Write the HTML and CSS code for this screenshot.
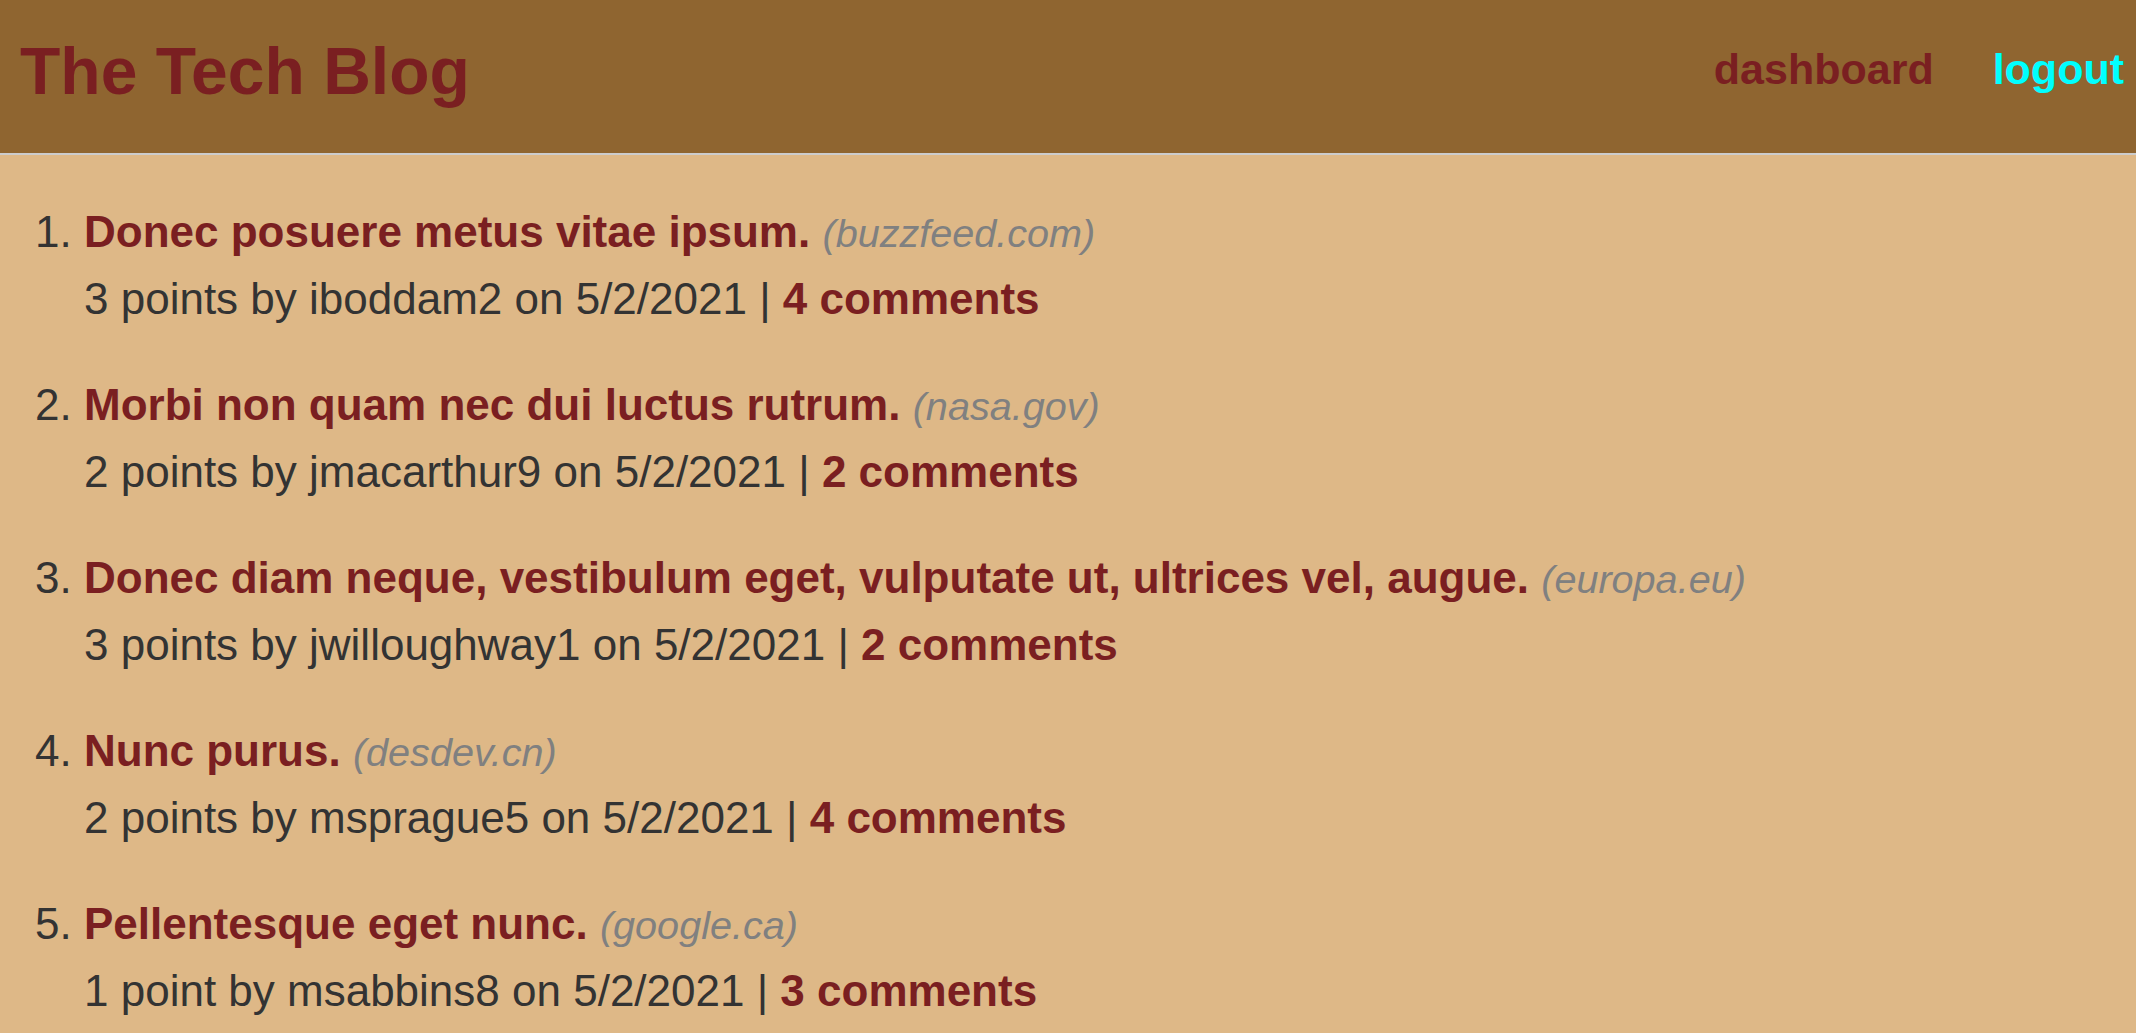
FILE: index.html
```html
<!DOCTYPE html>
<html lang="en">
<head>
<meta charset="utf-8">
<title>The Tech Blog</title>
<link rel="stylesheet" href="styles.css">
</head>
<body>
<header class="site-header">
  <h1 class="brand">The Tech Blog</h1>
  <nav class="nav">
    <a class="nav-link" href="#">dashboard</a>
    <a class="nav-link nav-logout" href="#">logout</a>
  </nav>
</header>
<main class="content">
  <ol class="posts">
    <li class="post">
      <div class="post-title"><a href="#" class="title-link">Donec posuere metus vitae ipsum.</a> <span class="domain">(buzzfeed.com)</span></div>
      <div class="post-meta">3 points by iboddam2 on 5/2/2021 | <a href="#" class="comments">4 comments</a></div>
    </li>
    <li class="post">
      <div class="post-title"><a href="#" class="title-link">Morbi non quam nec dui luctus rutrum.</a> <span class="domain">(nasa.gov)</span></div>
      <div class="post-meta">2 points by jmacarthur9 on 5/2/2021 | <a href="#" class="comments">2 comments</a></div>
    </li>
    <li class="post">
      <div class="post-title"><a href="#" class="title-link">Donec diam neque, vestibulum eget, vulputate ut, ultrices vel, augue.</a> <span class="domain">(europa.eu)</span></div>
      <div class="post-meta">3 points by jwilloughway1 on 5/2/2021 | <a href="#" class="comments">2 comments</a></div>
    </li>
    <li class="post">
      <div class="post-title"><a href="#" class="title-link">Nunc purus.</a> <span class="domain">(desdev.cn)</span></div>
      <div class="post-meta">2 points by msprague5 on 5/2/2021 | <a href="#" class="comments">4 comments</a></div>
    </li>
    <li class="post">
      <div class="post-title"><a href="#" class="title-link">Pellentesque eget nunc.</a> <span class="domain">(google.ca)</span></div>
      <div class="post-meta">1 point by msabbins8 on 5/2/2021 | <a href="#" class="comments">3 comments</a></div>
    </li>
  </ol>
</main>
</body>
</html>
```
FILE: styles.css
```css
html, body {
  margin: 0;
  padding: 0;
}
body {
  background: #deb887;
  font-family: "Liberation Sans", Arial, sans-serif;
  color: #333333;
}
.site-header {
  background: #8f6530;
  height: 153px;
  border-bottom: 2px solid #cccccc;
  display: flex;
  justify-content: space-between;
  align-items: flex-start;
  box-sizing: content-box;
}
.brand {
  margin: 0;
  padding: 33px 0 0 20px;
  font-size: 66px;
  line-height: 76px;
  font-weight: bold;
  color: #7a1f21;
}
.nav {
  display: flex;
  gap: 59px;
  padding: 44px 12px 0 0;
}
.nav-link {
  font-size: 43px;
  line-height: 50px;
  font-weight: bold;
  color: #7a1f21;
  text-decoration: none;
}
.nav-logout {
  color: #00ffff;
}
.content {
  padding: 0;
}
.posts {
  margin: 44px 0 0 0;
  padding: 0 0 0 84px;
  font-size: 44px;
  line-height: 66px;
}
.post {
  margin-bottom: 40px;
}
.title-link {
  color: #7a1f21;
  font-weight: bold;
  text-decoration: none;
}
.domain {
  color: #808080;
  font-style: italic;
  font-size: 0.9em;
}
.comments {
  color: #7a1f21;
  font-weight: bold;
  text-decoration: none;
}
```
